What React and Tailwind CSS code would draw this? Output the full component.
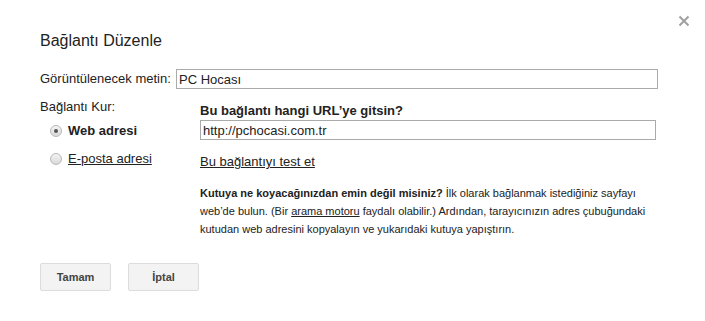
import React from 'react'

function Radio({ checked }) {
  return (
    <span className="relative inline-block w-[12px] h-[12px] rounded-full border border-[#b8b8b8] bg-gradient-to-b from-[#f4f4f4] to-[#d9d9d9] shrink-0">
      {checked && (
        <span className="absolute left-[3px] top-[3px] w-[4px] h-[4px] rounded-full bg-[#555]" />
      )}
    </span>
  )
}

export default function App() {
  return (
    <div className="relative w-[705px] h-[321px] bg-white text-[#222] font-['Liberation_Sans',Arial,sans-serif]">
      {/* close button */}
      <button className="absolute left-[678px] top-[15px] w-[12px] h-[12px]">
        <svg width="12" height="12" viewBox="0 0 12 12">
          <path d="M1.5 1.5 L10.5 10.5 M10.5 1.5 L1.5 10.5" stroke="#a0a0a0" strokeWidth="2" />
        </svg>
      </button>

      <div className="pl-[40px] pt-[31px]">
        <h1 className="text-[16px] leading-[20px]">Bağlantı Düzenle</h1>

        <div className="flex items-center mt-[18px]">
          <label className="w-[136px] text-[13px] leading-[16px]">Görüntülenecek metin:</label>
          <input
            className="w-[482px] h-[20px] border border-[#aaa] px-[2px] text-[13px] text-[#222] outline-none"
            defaultValue="PC Hocası"
          />
        </div>

        <div className="flex mt-[10px]">
          <div className="w-[160px]">
            <div className="text-[13px] leading-[16px]">Bağlantı Kur:</div>
            <div className="flex items-center gap-[6px] pl-[10px] mt-[8px]">
              <Radio checked />
              <span className="text-[13px] leading-[16px] font-bold">Web adresi</span>
            </div>
            <div className="flex items-center gap-[6px] pl-[10px] mt-[12px]">
              <Radio />
              <span className="text-[13px] leading-[16px] underline">E-posta adresi</span>
            </div>
          </div>

          <div className="w-[456px] mt-[4px]">
            <div className="text-[13px] leading-[16px] font-bold">Bu bağlantı hangi URL’ye gitsin?</div>
            <input
              className="block mt-[1px] w-[456px] h-[20px] border border-[#aaa] px-[2px] text-[13px] text-[#222] outline-none"
              defaultValue="http://pchocasi.com.tr"
            />
            <div className="mt-[14px] text-[13px] leading-[16px] underline">Bu bağlantıyı test et</div>
            <p className="mt-[14px] text-[11px] leading-[18px]">
              <span className="font-bold">Kutuya ne koyacağınızdan emin değil misiniz?</span>{' '}
              İlk olarak bağlanmak istediğiniz sayfayı web’de bulun. (Bir{' '}
              <span className="underline">arama motoru</span> faydalı olabilir.) Ardından, tarayıcınızın adres
              çubuğundaki kutudan web adresini kopyalayın ve yukarıdaki kutuya yapıştırın.
            </p>
          </div>
        </div>

        <div className="flex gap-[17px] mt-[25px]">
          <button className="w-[71px] h-[28px] rounded-[2px] border border-[#dcdcdc] bg-[#f3f3f3] text-[11px] font-bold text-[#444]">
            Tamam
          </button>
          <button className="w-[71px] h-[28px] rounded-[2px] border border-[#dcdcdc] bg-[#f3f3f3] text-[11px] font-bold text-[#444]">
            İptal
          </button>
        </div>
      </div>
    </div>
  )
}
